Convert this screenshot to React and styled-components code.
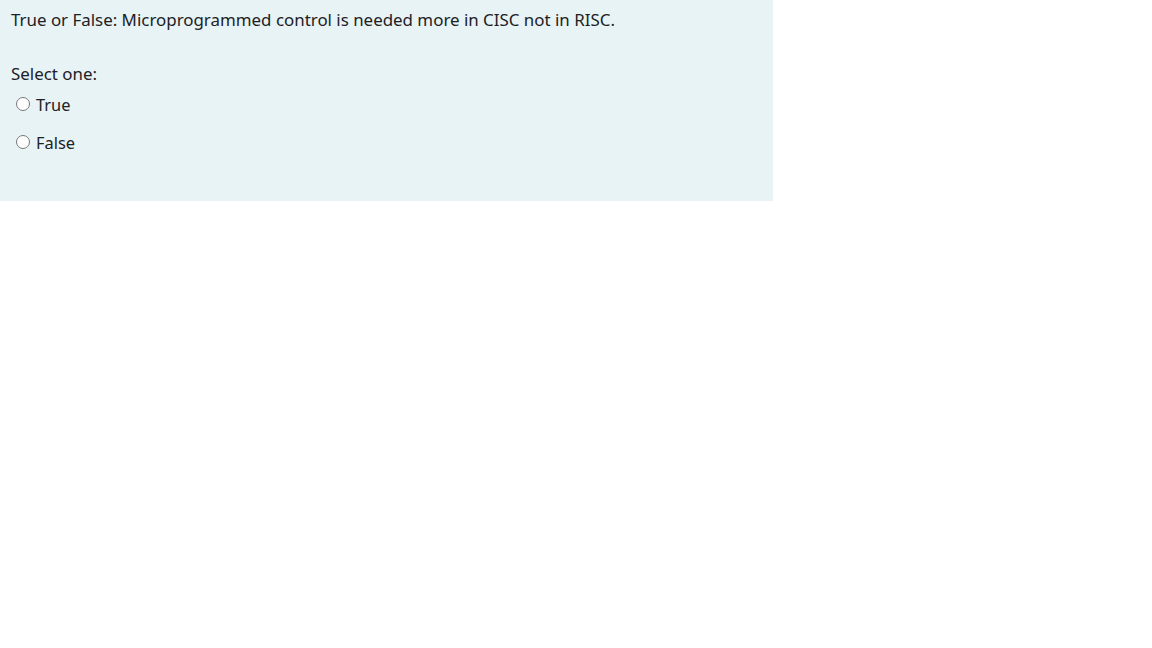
import React from "react";
import styled, { createGlobalStyle } from "styled-components";

const Global = createGlobalStyle`
  html, body { margin: 0; padding: 0; background: #fff; }
  body { font-family: "Noto Sans", "Open Sans", sans-serif; color: #1d2125; }
`;

const Panel = styled.div`
  width: 773px;
  height: 201px;
  box-sizing: border-box;
  background: #e7f3f5;
  padding: 8px 11px;
  font-size: 16.9px;
  line-height: 24px;
`;

const QText = styled.p`
  margin: 0 0 30px 0;
`;

const Prompt = styled.div`
  margin: 0 0 7px 0;
`;

const Answers = styled.div`
  display: flex;
  flex-direction: column;
  gap: 14px;
  padding-left: 5px;
`;

const Option = styled.label`
  display: flex;
  align-items: center;
  gap: 6px;
  height: 24px;
  font-size: 16.4px;
`;

const Radio = styled.input.attrs({ type: "radio" })`
  width: 14px;
  height: 14px;
  margin: -2px 0 0 0;
`;

export default function App() {
  return (
    <>
      <Global />
      <Panel>
        <QText>True or False: Microprogrammed control is needed more in CISC not in RISC.</QText>
        <Prompt>Select one:</Prompt>
        <Answers>
          <Option><Radio name="q" />True</Option>
          <Option><Radio name="q" />False</Option>
        </Answers>
      </Panel>
    </>
  );
}
